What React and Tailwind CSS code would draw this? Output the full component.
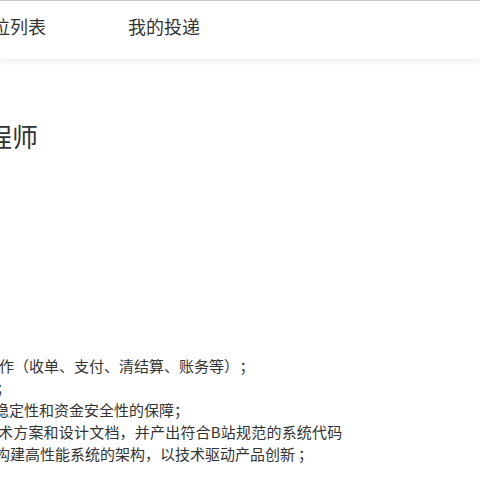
export default function App() {
  const font = { fontFamily: '"Noto Sans CJK SC", "Noto Sans", sans-serif' };
  return (
    <div
      className="w-[480px] h-[480px] overflow-hidden bg-white relative text-[#333]"
      style={font}
    >
      <header className="h-[59px] border-t border-[#c8c8c8] bg-white shadow-[0_2px_6px_rgba(0,0,0,0.08)] flex items-center pb-[9px] relative z-10">
        <nav className="flex items-center gap-[82px] -ml-[26px] text-[18px] leading-none">
          <a className="text-[#333]">职位列表</a>
          <a className="text-[#333]">我的投递</a>
        </nav>
      </header>
      <main>
        <h1 className="mt-[57px] -ml-[40px] text-[26px] leading-[39px] text-[#333] font-normal">
          工程师
        </h1>
        <div className="mt-[200px] text-[15px] leading-[22px] text-[#333] whitespace-nowrap">
          <p className="-ml-[1px]">作（收单、支付、清结算、账务等）<span className="pl-[8px]">；</span></p>
          <p className="-ml-[4px]">；</p>
          <p className="-ml-[6px]">稳定性和资金安全性的保障；</p>
          <p className="-ml-[2px] tracking-[0.2px]">术方案和设计文档，并产出符合B站规范的系统代码</p>
          <p className="-ml-[5px]">构建高性能系统的架构，以技术驱动产品创新<span className="pl-[3px]">；</span></p>
        </div>
      </main>
    </div>
  );
}
